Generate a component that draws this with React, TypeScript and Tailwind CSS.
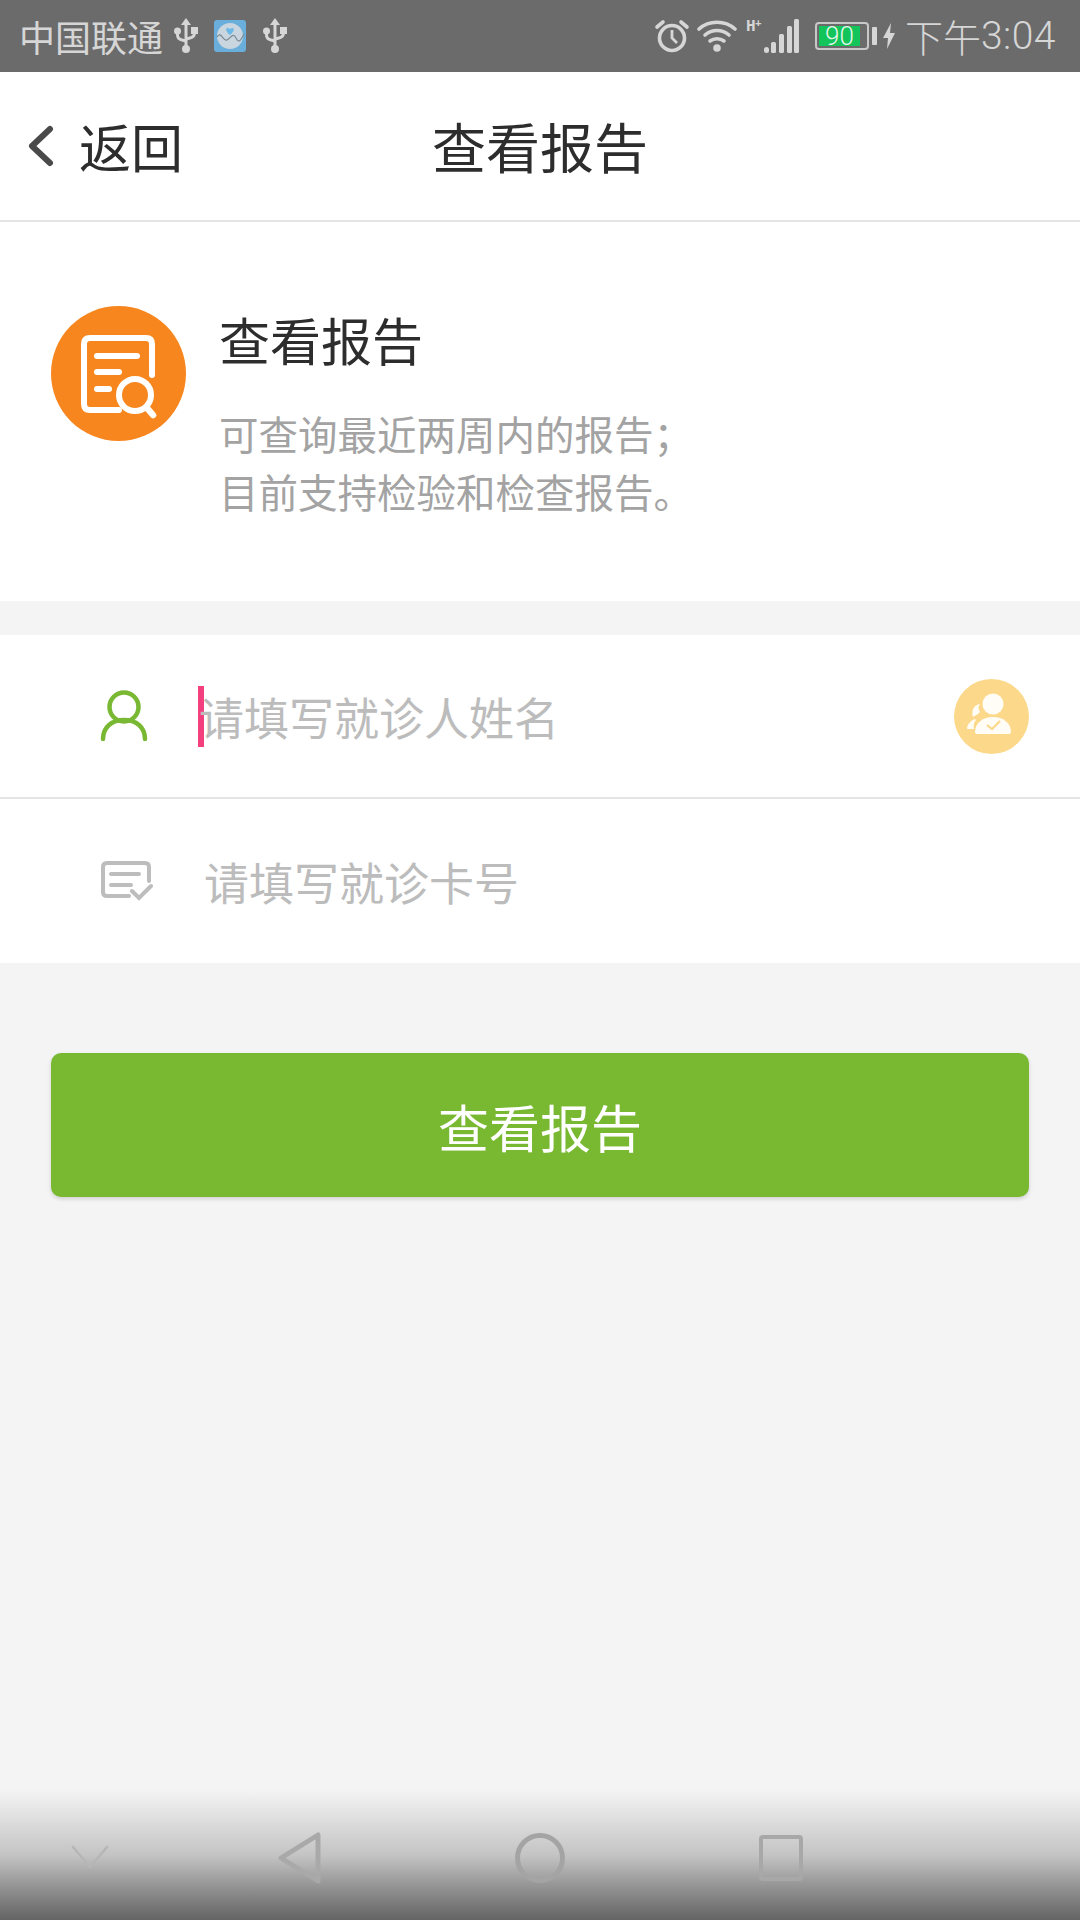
const cjk = "font-['Noto_Sans_CJK_SC',sans-serif]";

function UsbIcon() {
  return (
    <svg width="24" height="36" viewBox="0 0 24 36" fill="none" stroke="#d6d6d6" strokeWidth="3">
      <path d="M12 5V31" />
      <path d="M12 0L17 7H7Z" fill="#d6d6d6" stroke="none" />
      <circle cx="12" cy="31" r="4" fill="#d6d6d6" stroke="none" />
      <path d="M3.5 14V17Q3.5 21 8 22L12 23" />
      <path d="M20.5 12V15Q20.5 19 16 20L12 21" />
      <circle cx="3.5" cy="13" r="3.5" fill="#d6d6d6" stroke="none" />
      <rect x="17" y="9" width="7" height="7" fill="#d6d6d6" stroke="none" />
    </svg>
  );
}

function AppBadge() {
  return (
    <svg width="32" height="32" viewBox="0 0 32 32">
      <rect width="32" height="32" rx="3" fill="#6aaedb" />
      <circle cx="16" cy="16" r="13" fill="#c9d6df" />
      <path d="M16 15C10 10 12 6 16 9C20 6 22 10 16 15Z" fill="#6cb8e6" />
      <path d="M3 17C7 10 9 22 13 20S19 12 22 18S27 20 30 14" fill="none" stroke="#7b8b96" strokeWidth="1.2" />
    </svg>
  );
}

function StatusRight() {
  return (
    <div className="flex items-center">
      <svg width="36" height="36" viewBox="0 0 36 36" fill="none" stroke="#d6d6d6" strokeWidth="3.6">
        <circle cx="18" cy="20" r="12.5" />
        <path d="M18 12V20L23 25" strokeWidth="2.8" />
        <path d="M3 9L9 4M33 9L27 4" strokeLinecap="round" />
      </svg>
      <svg className="ml-[7px]" width="40" height="32" viewBox="0 0 40 32" fill="none" stroke="#d6d6d6" strokeWidth="3.6" strokeLinecap="round">
        <path d="M2 9C12 0 28 0 38 9" />
        <path d="M8 15C15 9 25 9 32 15" />
        <path d="M13 21C17 18 23 18 27 21" />
        <circle cx="20" cy="28" r="3.8" fill="#d6d6d6" stroke="none" />
      </svg>
      <svg className="ml-[9px] mb-[1px]" width="54" height="36" viewBox="0 0 54 36" fill="#d6d6d6">
        <text x="0" y="13" fontSize="16" fontWeight="700" fontFamily="Liberation Mono">H</text>
        <text x="9" y="9" fontSize="11" fontWeight="700" fontFamily="Liberation Mono">+</text>
        <rect x="18" y="29" width="5" height="6" rx="2.5" />
        <rect x="25" y="24" width="5" height="11" rx="1.5" />
        <rect x="33" y="16" width="5" height="19" rx="1.5" />
        <rect x="41" y="8" width="5" height="27" rx="1.5" />
        <rect x="48" y="1" width="5" height="34" rx="1.5" />
      </svg>
      <div className="ml-[15px] w-[54px] h-[28px] border-2 border-[#c8c8c8] rounded-[4px] p-[2px] flex">
        <div className="w-[41px] h-full bg-[#12c45a] flex items-center justify-center text-[26px] leading-none text-[#e4f5e9] font-['Roboto',sans-serif] font-light">
          90
        </div>
      </div>
      <div className="ml-[3px] w-[5px] h-[18px] rounded-[1px] bg-[#d6d6d6]" />
      <svg className="ml-[6px]" width="12" height="26" viewBox="0 0 12 26" fill="#d6d6d6">
        <path d="M8 0L0 15H5L4 26L12 10H7Z" />
      </svg>
      <div className="ml-[10px] flex items-center leading-none text-[#d6d6d6]">
        <span className={`text-[38px] font-light ${cjk}`}>下午</span>
        <span className="text-[39px] font-['Roboto',sans-serif] font-light tracking-[0.5px]">3:04</span>
      </div>
    </div>
  );
}

function StatusBar() {
  return (
    <div className="h-[72px] bg-[#6b6b6b] flex items-center justify-between pl-[19px] pr-[24px]">
      <div className="flex items-center">
        <span className={`text-[36px] leading-none text-[#d6d6d6] ${cjk}`}>中国联通</span>
        <span className="ml-[11px] flex"><UsbIcon /></span>
        <span className="ml-[16px] flex"><AppBadge /></span>
        <span className="ml-[17px] flex"><UsbIcon /></span>
      </div>
      <StatusRight />
    </div>
  );
}

function Header() {
  return (
    <div className="relative h-[150px] bg-white border-b-2 border-[#e4e4e4] flex items-center pl-[28px]">
      <svg width="26" height="42" viewBox="0 0 26 42" fill="none" stroke="#4a4a4a" strokeWidth="6" strokeLinecap="round" strokeLinejoin="round">
        <path d="M22 4L4 21L22 38" />
      </svg>
      <span className={`ml-[25px] text-[52px] leading-none text-[#2d2d2d] ${cjk}`}>返回</span>
      <div className={`absolute inset-x-0 top-0 h-full flex items-center justify-center text-[54px] leading-none text-[#2d2d2d] ${cjk}`}>
        查看报告
      </div>
    </div>
  );
}

function ReportLogo() {
  return (
    <div className="w-[135px] h-[135px] rounded-full bg-[#f7861f] flex items-center justify-center shrink-0">
      <svg className="overflow-visible" width="80" height="84" viewBox="0 0 80 84" fill="none" stroke="#ffffff" strokeWidth="6" strokeLinecap="round">
        <path d="M40 78H11Q5 78 5 72V12Q5 6 11 6H67Q73 6 73 12V43" />
        <path d="M18 24H58" />
        <path d="M18 40H40" />
        <path d="M18 57H30" />
        <circle cx="56" cy="63" r="16" />
        <path d="M68 76L74 83" strokeWidth="6.5" />
      </svg>
    </div>
  );
}

function Intro() {
  return (
    <div className="h-[379px] bg-white flex items-start pl-[51px] pt-[84px]">
      <ReportLogo />
      <div className={`ml-[33px] ${cjk}`}>
        <div className="text-[51px] leading-none text-[#2d2d2d] mt-[8px]">查看报告</div>
        <div className="mt-[39px] text-[39.5px] leading-[58px] text-[#a3a3a3]">
          <div>可查询最近两周内的报告；</div>
          <div>目前支持检验和检查报告。</div>
        </div>
      </div>
    </div>
  );
}

function Form() {
  return (
    <div className={`mt-[34px] bg-white ${cjk}`}>
      <div className="h-[164px] border-b-2 border-[#e4e4e4] flex items-center">
        <svg className="ml-[100px] shrink-0" width="48" height="52" viewBox="0 0 48 52" fill="none" stroke="#79b833" strokeWidth="4.5" strokeLinecap="round">
          <circle cx="24" cy="17" r="14.5" />
          <path d="M3 49C3 37 12 30 24 30S45 37 45 49" />
        </svg>
        <div className="ml-[50px] w-[6px] h-[61px] bg-[#f43f7f] shrink-0" />
        <div className="ml-[-5px] text-[45px] leading-none text-[#bcbcbc]">请填写就诊人姓名</div>
        <div className="ml-auto mr-[51px] w-[75px] h-[75px] rounded-full bg-[#fcd98a] flex items-center justify-center">
          <svg width="50" height="48" viewBox="0 0 50 48" fill="#fffdf6">
            <circle cx="26" cy="12" r="10.5" />
            <path d="M8 40C8 31 16 25 26 25S44 31 44 40Q44 42 42 42H10Q8 42 8 40Z" />
            <path d="M13 12C7 13 4 18 6 25C8 24 11 22 13 20C11 17 11 14 13 12Z" />
            <path d="M8 27C3 29 0 33 0 37H7C6 34 7 30 9 28Z" />
            <path d="M20 33L25 37L33 29" fill="none" stroke="#fcd98a" strokeWidth="2.2" />
          </svg>
        </div>
      </div>
      <div className="h-[164px] flex items-center">
        <svg className="ml-[101px] shrink-0" width="52" height="40" viewBox="0 0 52 40" fill="none" stroke="#bdbdbd" strokeWidth="4" strokeLinecap="round">
          <path d="M28 35H6Q2 35 2 31V6Q2 2 6 2H44Q48 2 48 6V20" />
          <path d="M10 13H38" />
          <path d="M10 24H30" />
          <path d="M31 30L38 37L50 25" />
        </svg>
        <div className="ml-[51px] text-[45px] leading-none text-[#bcbcbc]">请填写就诊卡号</div>
      </div>
    </div>
  );
}

function NavBar() {
  return (
    <div className="h-[130px] bg-gradient-to-b from-[#f4f4f4] via-[#c4c4c4] to-[#646464] flex items-start">
      <svg className="ml-[70px] mt-[55px]" width="40" height="24" viewBox="0 0 40 24" fill="none" stroke="#b6b6b6" strokeWidth="2.5" strokeLinecap="round">
        <path d="M3 2L20 22L37 2" />
      </svg>
      <svg className="ml-[168px] mt-[42px]" width="44" height="52" viewBox="0 0 44 52" fill="none" stroke="#a9a9a9" strokeWidth="5" strokeLinejoin="round">
        <path d="M40 3V49L3 26Z" />
      </svg>
      <svg className="ml-[193px] mt-[42px]" width="50" height="52" viewBox="0 0 50 52" fill="none" stroke="#a4a4a4" strokeWidth="5">
        <circle cx="25" cy="26" r="22.5" />
      </svg>
      <svg className="ml-[193px] mt-[44px]" width="46" height="48" viewBox="0 0 46 48" fill="none" stroke="#a8a8a8" strokeWidth="4">
        <rect x="3" y="3" width="40" height="42" rx="2" />
      </svg>
    </div>
  );
}

export default function App() {
  return (
    <div className="w-[1080px] h-[1920px] bg-[#f4f4f4] flex flex-col overflow-hidden">
      <StatusBar />
      <Header />
      <Intro />
      <Form />
      <div className="mx-[51px] mt-[90px] h-[144px] rounded-[10px] bg-[#79b931] shadow-[0_2px_4px_rgba(0,0,0,0.15)] flex items-center justify-center">
        <span className={`text-[51px] leading-none text-white mt-[2px] ${cjk}`}>查看报告</span>
      </div>
      <div className="mt-auto">
        <NavBar />
      </div>
    </div>
  );
}
